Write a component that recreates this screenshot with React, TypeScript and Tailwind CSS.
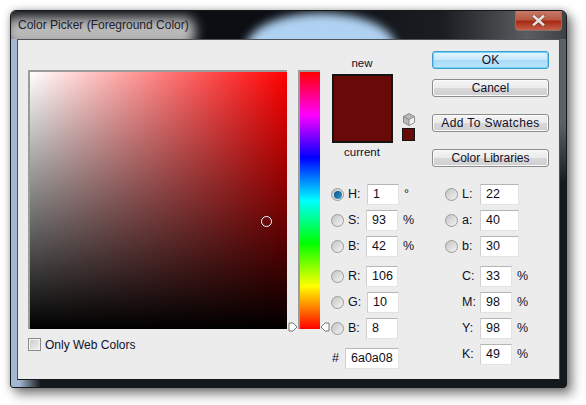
import type { ReactNode } from 'react';

const font = "[font-family:'Liberation_Sans',sans-serif]";

function Radio({ on = false }: { on?: boolean }) {
  return (
    <span className="flex h-[13px] w-[13px] shrink-0 items-center justify-center rounded-full border border-[#9a9a9a] bg-gradient-to-br from-[#c4c4c4] to-[#f4f4f4]">
      {on && <span className="h-[8px] w-[8px] rounded-full bg-gradient-to-br from-[#0d4f7e] to-[#34a0d8]" />}
    </span>
  );
}

function Field({ value, width = 'w-[39px]', className = '' }: { value: string; width?: string; className?: string }) {
  return (
    <div className={`flex h-[21px] items-center border border-[#e3e3e3] border-t-[#b5b5b5] border-l-[#d0d0d0] bg-white pl-[5px] text-[12.5px] leading-none text-[#0e0e20] ${width} ${className}`}>
      {value}
    </div>
  );
}

type RowProps = { label: string; value: string; unit?: string; radio?: boolean; on?: boolean; width?: string; className?: string; fieldClass?: string };

function Row({ label, value, unit, radio, on, width, className = '', fieldClass }: RowProps) {
  return (
    <div className={`flex h-[21px] items-center ${className}`}>
      <div className="flex w-[35px] items-center gap-[3px]">
        {radio ? <Radio on={on} /> : <span className="w-[13px]" />}
        <span className="ml-auto w-[18px] text-[12.5px] leading-none text-[#101028]">{label}</span>
      </div>
      <Field value={value} width={width} className={fieldClass} />
      {unit && <span className="ml-[5px] text-[12.5px] leading-none text-[#101028]">{unit}</span>}
    </div>
  );
}

function Btn({ children, primary, className = '' }: { children: ReactNode; primary?: boolean; className?: string }) {
  return (
    <div
      className={`flex h-[18px] w-[117px] items-center justify-center rounded-[3px] border text-[12px] leading-none text-[#10102a] ${
        primary
          ? 'border-[#3c9fd0] bg-[linear-gradient(#e6f6fe_0%,#c4e8fb_50%,#a8dbf7_52%,#bde6fb_100%)] shadow-[inset_0_0_0_1px_#6fd3f8]'
          : 'border-[#8c8c8c] bg-[linear-gradient(#f5f5f5_0%,#ebebeb_48%,#d8d8d8_52%,#cfcfcf_100%)] shadow-[inset_0_0_0_1px_#fbfbfb]'
      } ${className}`}
    >
      {children}
    </div>
  );
}

export default function App() {
  return (
    <div className={`h-[405px] w-[586px] overflow-hidden bg-white pl-[10px] pt-[10px] ${font}`}>
      <div className="relative flex h-[378px] w-[557px] flex-col rounded-t-[6px] rounded-b-[3px] border border-[#16181c] bg-[linear-gradient(90deg,#a3b9d3_0,#a3b9d3_8px,transparent_30px),linear-gradient(180deg,#5d6166_0,#5d6166_30%,#15181c_46%,#15181c_100%)] shadow-[5px_6px_12px_rgba(0,0,0,0.5),0_0_7px_rgba(0,0,0,0.25)]">
        {/* title bar */}
        <div className="relative flex h-[28px] shrink-0 items-center overflow-hidden rounded-t-[5px] bg-[linear-gradient(90deg,#0b0e13_0%,#0b0e13_52%,#1a1d21_78%,#5a5e60_93%,#3e4144_100%)] pl-[7px]">
          <div className="absolute left-[-6px] top-[6px] h-[30px] w-[190px] rounded-[10px] bg-[#b9b9b9] blur-[6px]" />
          <div className="absolute left-[235px] top-[2px] h-[70px] w-[150px] rounded-[50%] bg-[#b0d2f2] blur-[5px]" />
          <span className="relative text-[12px] leading-none text-[#20202c]">Color Picker (Foreground Color)</span>
          <div className="absolute right-[4px] top-0 flex h-[20px] w-[47px] items-center justify-center rounded-b-[4px] border border-t-0 border-[#8a706c] bg-[linear-gradient(#c87a68_0%,#b85a45_45%,#a82a14_55%,#c4604a_100%)]">
            <svg width="13" height="11" viewBox="0 0 13 11">
              <path d="M2 1.5 L11 9.5 M11 1.5 L2 9.5" stroke="#4a2a26" strokeWidth="4" strokeLinecap="square" opacity="0.5" />
              <path d="M2 1.5 L11 9.5 M11 1.5 L2 9.5" stroke="#e6e2de" strokeWidth="2.6" strokeLinecap="square" />
            </svg>
          </div>
        </div>

        {/* client area */}
        <div className="mx-[6px] flex h-[341px] border border-[#4d5358] border-b-[#16181c] bg-[#ececec] pl-[10px] pt-[30px]">
          {/* colour field */}
          <div className="flex w-[260px] shrink-0 flex-col">
            <div className="relative h-[259px] w-[259px] border-l-2 border-t-2 border-[#9b9b9b] bg-[linear-gradient(to_bottom,transparent,#000),linear-gradient(to_right,#fff,#f00)]">
              <div className="absolute left-[231px] top-[144px] h-[11px] w-[11px] rounded-full border border-white shadow-[0_0_0_0.5px_#222]" />
            </div>
            <label className="mt-[9px] flex items-center gap-[4px] text-[12px] leading-none text-[#10102a]">
              <span className="h-[13px] w-[13px] border border-[#8b8b8b] bg-gradient-to-br from-[#c9c9c9] to-[#f3f3f3] shadow-[inset_0_0_0_1px_#f2f2f2]" />
              Only Web Colors
            </label>
          </div>

          {/* hue slider */}
          <div className="relative ml-[10px] h-[259px] w-[22px] shrink-0 border-l-2 border-t-2 border-[#9b9b9b] bg-[linear-gradient(to_bottom,#f00,#f0f_16.67%,#00f_33.33%,#0ff_50%,#0f0_66.67%,#ff0_83.33%,#f00)]">
            <svg className="absolute left-[-12px] top-[250px]" width="10" height="10" viewBox="0 0 10 10">
              <path d="M1 1 H5 L9 5 L5 9 H1 Z" fill="#fff" stroke="#777" />
            </svg>
            <svg className="absolute right-[-10px] top-[250px]" width="10" height="10" viewBox="0 0 10 10">
              <path d="M9 1 H5 L1 5 L5 9 H9 Z" fill="#fff" stroke="#777" />
            </svg>
          </div>

          {/* values */}
          <div className="ml-[11px] flex w-[218px] flex-col">
            <div className="flex h-[114px]">
              <div className="-mt-[12px] flex w-[62px] flex-col items-center text-[11.5px] leading-none text-[#10102a]">
                <span className="h-[11px]">new</span>
                <div className="mt-[5px] h-[69px] w-[61px] border-2 border-[#141414] bg-[#6a0a08]" />
                <span className="mt-[4px]">current</span>
              </div>
              <div className="ml-[8px] flex w-[14px] flex-col items-center pt-[43px]">
                <svg className="ml-[1px]" width="12" height="13" viewBox="0 0 12 13">
                  <path d="M6 0.5 L11.5 3.5 V9.5 L6 12.5 L0.5 9.5 V3.5 Z" fill="#b8b8b8" stroke="#8a8a8a" />
                  <path d="M6 6.5 L11 3.8 V9.3 L6 12 Z" fill="#f2f2f2" />
                  <path d="M0.5 3.5 L6 6.5 L11.5 3.5 M6 6.5 V12.5" fill="none" stroke="#8a8a8a" />
                </svg>
                <div className="mt-[2px] h-[13px] w-[13px] border border-[#141414] bg-[#6a0a08]" />
              </div>
              <div className="ml-[17px] flex flex-col">
                <Btn primary className="-mt-[19px]">OK</Btn>
                <Btn className="mt-[10px]">Cancel</Btn>
                <Btn className="mt-[17px] tracking-[0.4px]">Add To Swatches</Btn>
                <Btn className="mt-[17px]">Color Libraries</Btn>
              </div>
            </div>

            <div className="flex">
              <div className="flex w-[114px] flex-col">
                <Row label="H:" value="1" unit="°" radio on width="w-[32px]" fieldClass="ml-[1px]" />
                <Row label="S:" value="93" unit="%" radio width="w-[32px]" className="mt-[5px]" />
                <Row label="B:" value="42" unit="%" radio width="w-[32px]" className="mt-[5px]" />
                <Row label="R:" value="106" radio width="w-[32px]" className="mt-[9px]" />
                <Row label="G:" value="10" radio width="w-[32px]" className="mt-[5px]" fieldClass="ml-[1px]" />
                <Row label="B:" value="8" radio width="w-[32px]" className="mt-[5px]" />
                <div className="mt-[9px] flex h-[21px] items-center">
                  <span className="ml-[1px] w-[13px] text-[12.5px] leading-none text-[#101028]">#</span>
                  <Field value="6a0a08" width="w-[54px]" />
                </div>
              </div>
              <div className="flex flex-col">
                <Row label="L:" value="22" radio />
                <Row label="a:" value="40" radio className="mt-[5px]" />
                <Row label="b:" value="30" radio className="mt-[5px]" />
                <Row label="C:" value="33" unit="%" width="w-[32px]" className="mt-[9px]" />
                <Row label="M:" value="98" unit="%" width="w-[32px]" className="mt-[5px]" />
                <Row label="Y:" value="98" unit="%" width="w-[32px]" className="mt-[5px]" />
                <Row label="K:" value="49" unit="%" width="w-[32px]" className="mt-[5px]" />
              </div>
            </div>
          </div>
        </div>
      </div>
    </div>
  );
}
